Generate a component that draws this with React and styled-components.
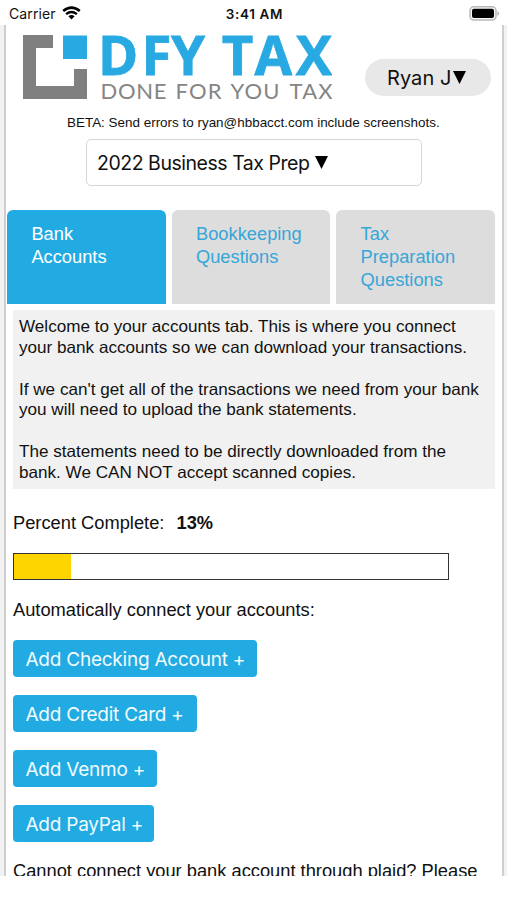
import React from "react";
import styled, { createGlobalStyle } from "styled-components";

const BLUE = "#22abe3";

const GlobalStyle = createGlobalStyle`
  * { box-sizing: border-box; }
  body { margin: 0; background: #fff; color: #111; }
  button { font: inherit; border: 0; margin: 0; cursor: pointer; }
`;

const Phone = styled.div`
  width: 507px;
  height: 900px;
  overflow: hidden;
  background: #fff;
  font-family: "Liberation Sans", Arial, sans-serif;
`;

const StatusBar = styled.header`
  height: 25px;
  padding: 3px 7px 0 9px;
  display: grid;
  grid-template-columns: 1fr auto 1fr;
  align-items: center;
  font: 14px/20px Inter, sans-serif;
`;

const Carrier = styled.div`
  display: flex;
  align-items: center;
  gap: 6px;
  letter-spacing: 0.1px;
  svg { margin-top: -2px; }
`;

const Clock = styled.div`
  font-size: 13.5px;
  font-weight: 600;
  letter-spacing: 0.65px;
`;

const BatterySlot = styled.div`
  display: flex;
  justify-content: flex-end;
  margin-top: -2px;
`;

const Viewport = styled.div`
  height: 851px;
  overflow: hidden;
  padding: 0 3px 0 4px;
  background: #f2f2f2;
`;

const Page = styled.main`
  height: 900px;
  background: #fff;
  border: solid #cfcfcf;
  border-width: 0 2px;
  padding: 0 8px 0 7px;
`;

const Brand = styled.div`
  display: flex;
  height: 87px;
  > * { flex-shrink: 0; }
`;

const UserButton = styled.button`
  width: 126px;
  height: 37px;
  margin: 34px 0 0 33px;
  padding: 2px 0 0 22px;
  border-radius: 19px;
  background: #e8e8e8;
  color: #111;
  font: 20px/35px Inter, sans-serif;
  letter-spacing: 0.05px;
  display: flex;
  align-items: center;
  svg { margin: -2px 0 0 2px; }
`;

const BetaNote = styled.p`
  margin: 0;
  padding-left: 54px;
  height: 27px;
  font-size: 13.44px;
  line-height: 21px;
  white-space: nowrap;
`;

const ProductSelect = styled.button`
  display: flex;
  align-items: center;
  gap: 6px;
  width: 336px;
  height: 47px;
  margin-left: 73px;
  padding: 0 10px;
  border: 1.5px solid #d6d6d6;
  border-radius: 5px;
  background: #fff;
  color: #111;
  font: 19.5px/44px Inter, sans-serif;
  letter-spacing: -0.47px;
  white-space: nowrap;
`;

const Tabs = styled.nav`
  display: grid;
  grid-template-columns: repeat(3, 158.6px);
  gap: 6px;
  margin: 24px 0 0 -6px;
`;

const Tab = styled.button`
  height: 94px;
  padding: 11.9px 24.4px;
  border-radius: 6px 6px 0 0;
  background: ${(p) => (p.$active ? BLUE : "#dddddd")};
  color: ${(p) => (p.$active ? "#fff" : "#37a6d8")};
  font-size: 18.3px;
  line-height: 23.2px;
  text-align: left;
  display: flex;
  align-items: flex-start;
`;

const Intro = styled.section`
  width: 482px;
  height: 179px;
  margin-top: 6px;
  padding: 7.4px 6px 0;
  background: #f1f1f1;
  font-size: 17.12px;
  line-height: 20.75px;
  white-space: nowrap;
  p { margin: 0 0 20.75px; }
`;

const Progress = styled.div`
  height: 64px;
  padding-top: 23px;
  font-size: 18.3px;
  line-height: 21px;
  strong { margin-left: 7px; }
`;

const Track = styled.div`
  width: 436px;
  height: 27px;
  border: 1.5px solid #333;
`;

const Fill = styled.div`
  width: 13.2%;
  height: 100%;
  background: #ffd500;
`;

const Prompt = styled.p`
  margin: 19px 0 20px;
  font-size: 18.3px;
  line-height: 21px;
`;

const Actions = styled.div`
  display: flex;
  flex-direction: column;
  align-items: flex-start;
  gap: 18px;
`;

const AddButton = styled.button`
  width: ${(p) => p.$width}px;
  height: 37px;
  padding: 2px 0 0 12.5px;
  border-radius: 4px;
  background: ${BLUE};
  color: #f1fbff;
  font: 19px/35px Inter, sans-serif;
  letter-spacing: -0.24px;
  text-align: left;
  white-space: nowrap;
`;

const Help = styled.p`
  margin: 18px 0 0;
  font-size: 18.3px;
  line-height: 21px;
  white-space: nowrap;
`;

const WifiIcon = () => (
  <svg width="19" height="14" viewBox="0 0 19 14">
    <path d="M1.2 5Q9.5-1.8 17.8 5" fill="none" stroke="#000" strokeWidth="2.6" />
    <path d="M4.1 8.1Q9.5 3.8 14.9 8.1" fill="none" stroke="#000" strokeWidth="2.4" />
    <path d="M6.4 10.3Q9.5 7.9 12.6 10.3L9.5 13.6Z" />
  </svg>
);

const BatteryIcon = () => (
  <svg width="31" height="15" viewBox="0 0 31 15">
    <rect x="1" y=".8" width="26" height="13.2" rx="3.8" fill="#f7f7f7" stroke="#b9b9b9" strokeWidth="1.5" />
    <rect x="3" y="2.8" width="22" height="9.2" rx="2" />
    <path d="M28.5 5Q31.5 7.4 28.5 10Z" fill="#aaa" />
  </svg>
);

const Caret = () => (
  <svg width="13" height="13" viewBox="0 0 13 13">
    <path d="M0 0H13L6.5 13Z" />
  </svg>
);

const Logo = () => (
  <svg width="319" height="87" viewBox="13 25 319 87">
    <path d="M23 35H53V48H36V86H74V69H87V99H23Z" fill="#808080" />
    <rect x="63" y="35.5" width="24" height="23.5" fill="#29a9e1" />
    <g fill="#29a9e1" stroke="#29a9e1" strokeWidth=".8" fontFamily="Open Sans, sans-serif" fontWeight="700" fontSize="54.5">
      <text x="98 141.5 171" y="75.1">DFY</text>
      <text x="221.7 254.5 295.7" y="75.1">TAX</text>
    </g>
    <g fill="#858585" fontFamily="Lato, sans-serif" fontSize="22">
      <text x="100.5" y="98.7" textLength="66" lengthAdjust="spacing">DONE</text>
      <text x="175.5" y="98.7" textLength="46" lengthAdjust="spacing">FOR</text>
      <text x="230.5" y="98.7" textLength="49" lengthAdjust="spacing">YOU</text>
      <text x="289.5" y="98.7" textLength="43" lengthAdjust="spacing">TAX</text>
    </g>
  </svg>
);

const ACCOUNTS = [
  ["Add Checking Account +", 244],
  ["Add Credit Card +", 184],
  ["Add Venmo +", 144],
  ["Add PayPal +", 141],
];

export default function App() {
  return (
    <Phone>
      <GlobalStyle />
      <StatusBar>
        <Carrier>Carrier <WifiIcon /></Carrier>
        <Clock>3:41 AM</Clock>
        <BatterySlot><BatteryIcon /></BatterySlot>
      </StatusBar>
      <Viewport>
        <Page>
          <Brand>
            <Logo />
            <UserButton>Ryan J<Caret /></UserButton>
          </Brand>
          <BetaNote>BETA: Send errors to ryan@hbbacct.com include screenshots.</BetaNote>
          <ProductSelect>2022 Business Tax Prep <Caret /></ProductSelect>
          <Tabs>
            <Tab $active>Bank<br />Accounts</Tab>
            <Tab>Bookkeeping<br />Questions</Tab>
            <Tab>Tax<br />Preparation<br />Questions</Tab>
          </Tabs>
          <Intro>
            <p>Welcome to your accounts tab. This is where you connect<br />your bank accounts so we can download your transactions.</p>
            <p>If we can't get all of the transactions we need from your bank<br />you will need to upload the bank statements.</p>
            <p>The statements need to be directly downloaded from the<br />bank. We CAN NOT accept scanned copies.</p>
          </Intro>
          <Progress>Percent Complete: <strong>13%</strong></Progress>
          <Track><Fill /></Track>
          <Prompt>Automatically connect your accounts:</Prompt>
          <Actions>
            {ACCOUNTS.map(([label, width]) => (
              <AddButton key={label} $width={width}>{label}</AddButton>
            ))}
          </Actions>
          <Help>Cannot connect your bank account through plaid? Please</Help>
        </Page>
      </Viewport>
    </Phone>
  );
}
